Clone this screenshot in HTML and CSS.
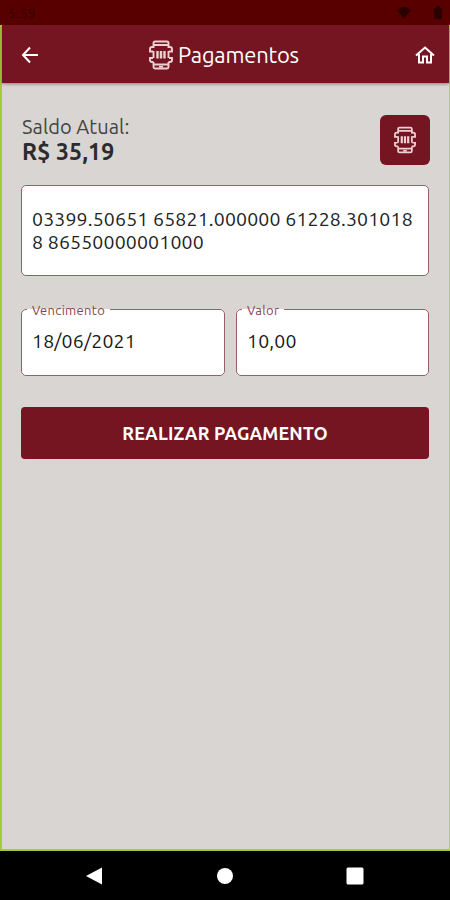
FILE: index.html
```html
<!DOCTYPE html>
<html lang="pt-BR">
<head>
  <meta charset="UTF-8">
  <meta name="viewport" content="width=device-width, initial-scale=1.0">
  <title>Pagamentos</title>
  <link rel="stylesheet" href="styles.css">
</head>
<body>

  <!-- Scanner icon, used in the title and on the scan button -->
  <svg class="symbols" aria-hidden="true">
    <symbol id="scanner" viewBox="0 0 24 30">
      <g fill="none" stroke="currentColor" stroke-width="1.9">
        <path d="M4.500 8V3Q4.500 1.500 6 1.500H18Q19.500 1.500 19.500 3V8M5 5H19"/>
        <path d="M4.500 22V27Q4.500 28.500 6 28.500H18Q19.500 28.500 19.500 27V22M5 24.500H19"/>
        <path d="M4.500 7H3Q1 7 1 9V11.500H4M19.500 7H21Q23 7 23 9V11.500H20M4.500 22H3Q1 22 1 20V18H4M19.500 22H21Q23 22 23 20V18H20"/>
        <path d="M4.500 11V18M19.500 11V18"/>
        <path d="M10 26.700H14"/>
      </g>
      <path d="M8.500 11V18.500M12 11V18.500M15.500 11V18.500" stroke="currentColor" stroke-width="2.4"/>
    </symbol>
  </svg>

  <div class="status-bar">
    <span class="clock">5:59</span>
    <svg class="wifi" width="14" height="12" viewBox="0 0 14 12"><path d="M0 3Q7-3 14 3L7 12Z"/></svg>
    <svg class="battery" width="8" height="13" viewBox="0 0 8 13"><path d="M2 0H6V2H8V13H0V2H2Z"/></svg>
  </div>

  <div class="app">
    <header>
      <svg class="back" width="18" height="18" viewBox="0 0 18 18"><path d="M9 1.5L2 9L9 16.5M2 9H17"/></svg>
      <h1>
        <svg class="title-icon" width="24" height="30"><use href="#scanner"/></svg>
        <span>Pagamentos</span>
      </h1>
      <svg class="home" width="20" height="20" viewBox="0 0 20 20"><path d="M1 10.5L10 2.500L19 10.5M4 9V17.500H8V11.500H12V17.500H16V9"/></svg>
    </header>

    <main>
      <div class="balance">
        <div class="balance-text">
          <p class="balance-label">Saldo Atual:</p>
          <p class="balance-value">R$ 35,19</p>
        </div>
        <button class="scan" aria-label="Ler código">
          <svg width="22" height="28"><use href="#scanner"/></svg>
        </button>
      </div>

      <div class="barcode">03399.50651 65821.000000 61228.3010188 86550000001000</div>

      <div class="fields">
        <fieldset class="due-date">
          <legend>Vencimento</legend>
          <span>18/06/2021</span>
        </fieldset>
        <fieldset class="amount">
          <legend>Valor</legend>
          <span>10,00</span>
        </fieldset>
      </div>

      <button class="pay">REALIZAR PAGAMENTO</button>
    </main>
  </div>

  <nav>
    <svg width="18" height="18" viewBox="0 0 18 18"><path d="M1 9L17 .5V17.500Z"/></svg>
    <svg width="18" height="18" viewBox="0 0 18 18"><circle cx="9" cy="9" r="8"/></svg>
    <svg width="18" height="18" viewBox="0 0 18 18"><rect x=".5" y=".5" width="17" height="17" rx="1.500"/></svg>
  </nav>

</body>
</html>
```
FILE: styles.css
```css
* {
  box-sizing: border-box;
}

body {
  font-family: "Ubuntu", "Noto Sans", sans-serif;
  margin: 0;
  height: 900px;
  display: flex;
  flex-direction: column;
  background-color: #000;
}

svg {
  display: block;
  flex: none;
}

.symbols {
  position: absolute;
  width: 0;
  height: 0;
}

.status-bar {
  height: 25px;
  display: flex;
  align-items: center;
  padding: 0 8px;
  background-color: #580000;
  color: #340000;
  fill: #2a0000;
}

.clock {
  font-size: 13px;
  letter-spacing: 0.7px;
  margin-right: auto;
}

.wifi {
  margin-right: 23px;
}

.app {
  flex: 1;
  border: 2px solid #a6cc35;
  border-top: 0;
  border-right: 1px solid #b5cc62;
  background-color: #d9d5d2;
}

header {
  height: 58px;
  display: flex;
  align-items: center;
  justify-content: space-between;
  padding: 1px 14px 0 19px;
  background-color: #751522;
  color: #fff;
  box-shadow: 0 1px 3px rgba(0, 0, 0, 0.4);
}

.back,
.home {
  fill: none;
  stroke: #fff;
  stroke-width: 2;
}

h1 {
  display: flex;
  align-items: center;
  gap: 5px;
  margin: 0 6px 0 0;
  font-size: 22px;
  font-weight: 400;
  letter-spacing: -0.2px;
}

.title-icon,
.scan svg {
  color: #f0cfd0;
}

main {
  padding: 32px 20px 0 19px;
}

.balance {
  height: 50px;
  display: flex;
  justify-content: space-between;
}

.balance-text {
  margin: -1px 0 0 1px;
}

.balance p {
  margin: 0;
  line-height: 25px;
}

.balance-label {
  font-size: 20px;
  letter-spacing: 0.05px;
  color: #444;
}

.balance-value {
  font-size: 23px;
  font-weight: 700;
  letter-spacing: 0.15px;
  color: #292d30;
}

button {
  border: 0;
  padding: 0;
  font-family: inherit;
  background-color: #751522;
  color: #fff;
}

.scan {
  width: 50px;
  height: 50px;
  display: flex;
  align-items: center;
  justify-content: center;
  margin-right: -1px;
  border-radius: 6px;
}

.barcode {
  height: 91px;
  margin-top: 20px;
  padding: 22px 12px 0 10px;
  border: 1px solid #965f67;
  border-radius: 5px;
  background-color: #fff;
  color: #222;
  font-size: 19.5px;
  line-height: 23px;
  letter-spacing: 0.15px;
  word-break: break-all;
}

.fields {
  display: grid;
  grid-template-columns: 204px 1fr;
  gap: 11px;
  margin-top: 26px;
}

fieldset {
  min-width: 0;
  height: 74px;
  margin: 0;
  padding: 12px 10px 0;
  border: 1px solid #965f67;
  border-radius: 5px;
  background-color: #fff;
  color: #181818;
  font-size: 19.5px;
  letter-spacing: 0.15px;
  line-height: 26px;
}

legend {
  height: 14px;
  margin-left: -5px;
  padding: 0 5px;
  color: #884250;
  font-size: 13px;
  letter-spacing: 0.3px;
  line-height: 16px;
}

.pay {
  display: block;
  width: 100%;
  height: 52px;
  margin-top: 31px;
  border-radius: 4px;
  font-size: 18px;
  font-weight: 700;
  letter-spacing: 0.15px;
}

nav {
  height: 49px;
  display: flex;
  align-items: center;
  justify-content: space-between;
  padding: 0 86px 0 85px;
  fill: #fff;
}
```
